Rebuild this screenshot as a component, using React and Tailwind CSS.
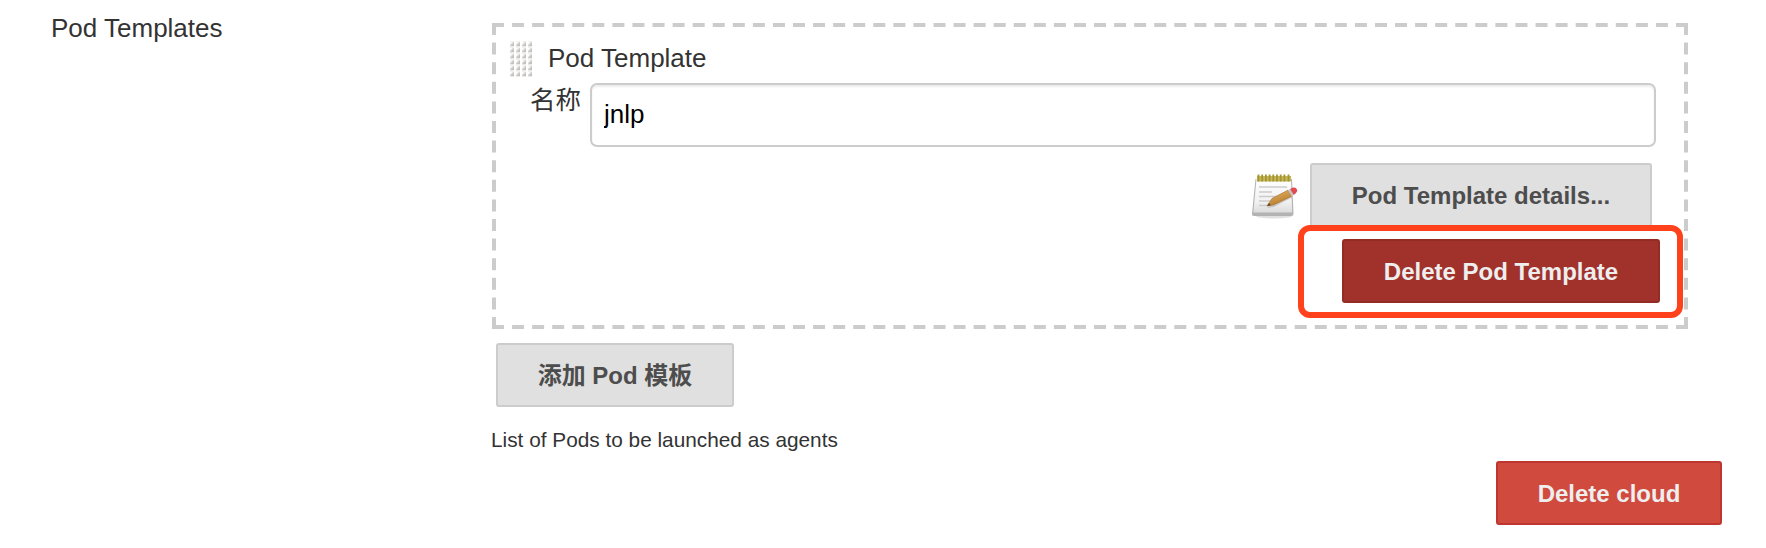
import React from "react";

const buttonBase =
  "flex h-16 items-center justify-center rounded-[3px] border-2 pt-px text-[24px] leading-none font-bold whitespace-nowrap";

function Button({ className, children }) {
  return <button className={`${buttonBase} ${className}`}>{children}</button>;
}

function DragGrip() {
  const rows = [0, 1, 2, 3, 4, 5];
  const cols = [0, 1, 2, 3];
  return (
    <svg className="block h-9 w-[22px]" viewBox="0 0 22 36">
      <defs>
        <linearGradient id="dot" x1="0" y1="0" x2="1" y2="1">
          <stop offset="0.2" stopColor="#ffffff" />
          <stop offset="0.6" stopColor="#c9c7c4" />
          <stop offset="1" stopColor="#bdbbb8" />
        </linearGradient>
      </defs>
      {rows.map((r) =>
        cols.map((c) => (
          <g key={`${r}-${c}`}>
            <rect x={c * 6} y={r * 6} width="4" height="1" fill="#f1f0ef" />
            <rect x={c * 6} y={r * 6 + 1} width="4" height="4" fill="url(#dot)" />
            <rect x={c * 6} y={r * 6 + 5} width="4" height="1" fill="#ecebea" />
          </g>
        ))
      )}
    </svg>
  );
}

function NotepadIcon() {
  return (
    <svg className="block size-12" viewBox="0 0 48 48">
      <defs>
        <linearGradient id="paper" x1="0" y1="0" x2="0" y2="1">
          <stop offset="0" stopColor="#ffffff" />
          <stop offset="0.7" stopColor="#f0f0f0" />
          <stop offset="1" stopColor="#dcdcdc" />
        </linearGradient>
        <linearGradient id="pencil" x1="0" y1="0" x2="0.5" y2="1">
          <stop offset="0" stopColor="#e9b963" />
          <stop offset="1" stopColor="#b67a2e" />
        </linearGradient>
      </defs>
      <ellipse cx="23" cy="44" rx="18" ry="2.5" fill="#000" opacity="0.12" />
      <path d="M4.500 7H41l1.500 34.500q0 2.500-2 2.500H3q-2.500 0-2-2.500Z" fill="#b3b3b3" />
      <path d="M5.500 7H40l1.200 33.500H2.300Z" fill="url(#paper)" />
      <path d="M6 4h34v5.500H6Z" fill="#c4b75c" />
      <path d="M7.500 2.500v7M11.200 2.500v7M14.900 2.500v7M18.600 2.500v7M22.300 2.500v7M26 2.500v7M29.700 2.500v7M33.400 2.500v7M37.500 2.500v7" stroke="#a5952f" strokeWidth="1.800" />
      <path d="M8 15h28M8 20h13M8 24.500h20M8 29h11M8 33.500h8" stroke="#cbcbcb" strokeWidth="1.600" />
      <path d="M16 36l7-1 18-9.500-1-3-19 9.500Z" fill="#000" opacity="0.15" />
      <path d="M16 34l5-7.500L37 18.200l3.700 6L23 32.700Z" fill="url(#pencil)" stroke="#a87331" strokeWidth="0.700" />
      <path d="M16 34l2-3 1.800 2.300Z" fill="#5d482b" />
      <path d="M37 18.200l2.500-1.400 3.500 6-2.300 1.400Z" fill="#c3c5c8" />
      <path d="M39.200 17q4-2.700 6.300-.3t-2.700 6.300Z" fill="#e34b52" />
    </svg>
  );
}

export default function App() {
  return (
    <main className="flex h-[548px] w-[1766px] overflow-hidden bg-white font-['Liberation_Sans','Noto_Sans_CJK_SC',sans-serif] text-[26px] leading-[30px] text-[#333]">
      <div className="w-[491px] shrink-0 pt-[13px] pl-[51px]">Pod Templates</div>

      <div className="flex w-[1231px] flex-col pt-[23px]">
        <section className="relative ml-px h-[306px] w-[1196px]">
          <div className="pointer-events-none absolute top-0 left-0 h-1/2 w-1/2 origin-top-left scale-200 border-2 border-dashed border-[#ccc]" />

          <div className="flex h-[60px] pt-[18px] pl-[18px]">
            <DragGrip />
            <span className="mt-[2px] ml-[16px]">Pod Template</span>
          </div>

          <div className="flex pl-[38px]">
            <label className="w-[60px] pt-[2px] text-[25.5px]">名称</label>
            <input
              className="h-16 w-[1066px] rounded-[7px] border-2 border-[#ccc] px-3 pb-[2px] text-[26px] text-black shadow-[inset_0_2px_2px_rgba(0,0,0,0.075)] outline-none"
              defaultValue="jnlp"
            />
          </div>

          <div className="flex items-start justify-end pt-4 pr-9">
            <div className="mt-[9px] mr-[11px]">
              <NotepadIcon />
            </div>
            <Button className="w-[342px] border-[#ccc] bg-[#e0e0e0] text-[#4d4d4d]">Pod Template details...</Button>
          </div>

          <div className="flex justify-end pt-3 pr-7">
            <Button className="w-[318px] border-[#942c25] bg-[#a0312b] text-[#eee]">Delete Pod Template</Button>
          </div>

          <div className="pointer-events-none absolute top-[202px] left-[806px] h-[93px] w-[385px] rounded-[12px] border-6 border-[#ff411c]" />
        </section>

        <Button className="mt-[14px] ml-[5px] w-[238px] border-[#ccc] bg-[#e0e0e0] text-[#4d4d4d]">添加 Pod 模板</Button>

        <p className="mt-[21px] h-[33px] text-[20.8px] leading-6">List of Pods to be launched as agents</p>

        <Button className="w-[226px] self-end border-[#bd362f] bg-[#d04a3e] text-[#eee]">Delete cloud</Button>
      </div>
    </main>
  );
}
